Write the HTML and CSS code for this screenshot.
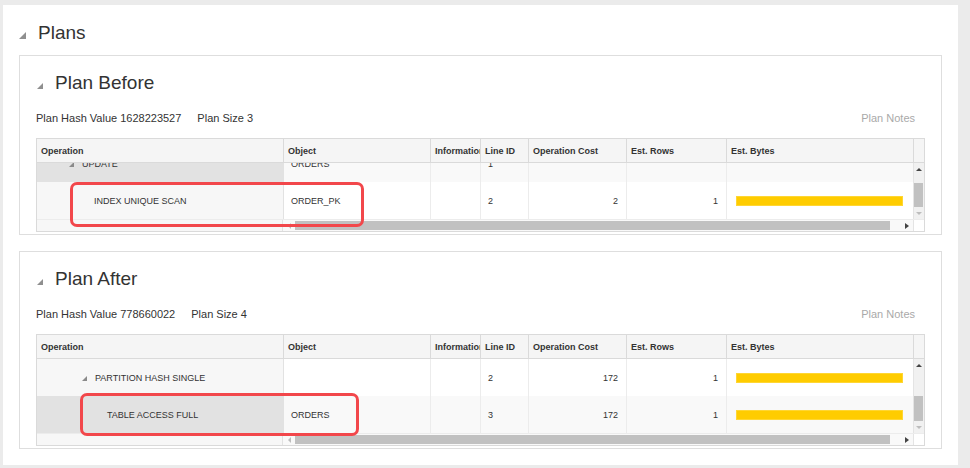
FILE: index.html
```html
<!DOCTYPE html>
<html>
<head>
<meta charset="utf-8">
<link rel="stylesheet" href="styles.css">
</head>
<body>
<section class="panel">
  <h2 class="title"><span class="tri tri-main"></span>Plans</h2>

  <div class="plan">
    <h3 class="title"><span class="tri tri-sub"></span>Plan Before</h3>
    <div class="meta"><span>Plan Hash Value 1628223527</span><span>Plan Size 3</span><span class="notes">Plan Notes</span></div>
    <div class="grid">
      <div class="head">
        <div class="c">Operation</div>
        <div class="c">Object</div>
        <div class="c">Information</div>
        <div class="c">Line ID</div>
        <div class="c">Operation Cost</div>
        <div class="c">Est. Rows</div>
        <div class="c">Est. Bytes</div>
        <div class="c"></div>
      </div>
      <div class="body body-before">
        <div class="rows rows-scrolled">
          <div class="row row-alt">
            <div class="c op op-sel lvl-a"><span class="tw"></span>UPDATE</div>
            <div class="c">ORDERS</div>
            <div class="c"></div>
            <div class="c">1</div>
            <div class="c num"></div>
            <div class="c num"></div>
            <div class="c"></div>
          </div>
          <div class="row">
            <div class="c op op-light lvl-b">INDEX UNIQUE SCAN</div>
            <div class="c">ORDER_PK</div>
            <div class="c"></div>
            <div class="c">2</div>
            <div class="c num">2</div>
            <div class="c num">1</div>
            <div class="c"><span class="bar"></span></div>
          </div>
        </div>
        <div class="vscroll">
          <div class="arrow-box"><span class="ar-up"></span></div>
          <div class="track"><span class="vthumb vthumb-before"></span></div>
          <div class="arrow-box"><span class="ar-down"></span></div>
        </div>
      </div>
      <div class="hscroll">
        <div class="hs-frozen"></div>
        <div class="hs-track"><span class="ar-left"></span><span class="hthumb"></span><span class="ar-right"></span></div>
        <div class="hs-corner"></div>
      </div>
    </div>
    <div class="mark mark-before"></div>
  </div>

  <div class="plan">
    <h3 class="title"><span class="tri tri-sub"></span>Plan After</h3>
    <div class="meta"><span>Plan Hash Value 778660022</span><span>Plan Size 4</span><span class="notes">Plan Notes</span></div>
    <div class="grid">
      <div class="head">
        <div class="c">Operation</div>
        <div class="c">Object</div>
        <div class="c">Information</div>
        <div class="c">Line ID</div>
        <div class="c">Operation Cost</div>
        <div class="c">Est. Rows</div>
        <div class="c">Est. Bytes</div>
        <div class="c"></div>
      </div>
      <div class="body body-after">
        <div class="rows">
          <div class="row">
            <div class="c op op-light lvl-c"><span class="tw"></span>PARTITION HASH SINGLE</div>
            <div class="c"></div>
            <div class="c"></div>
            <div class="c">2</div>
            <div class="c num">172</div>
            <div class="c num">1</div>
            <div class="c"><span class="bar"></span></div>
          </div>
          <div class="row row-alt">
            <div class="c op op-sel lvl-d">TABLE ACCESS FULL</div>
            <div class="c">ORDERS</div>
            <div class="c"></div>
            <div class="c">3</div>
            <div class="c num">172</div>
            <div class="c num">1</div>
            <div class="c"><span class="bar"></span></div>
          </div>
        </div>
        <div class="vscroll">
          <div class="arrow-box"><span class="ar-up"></span></div>
          <div class="track"><span class="vthumb vthumb-after"></span></div>
          <div class="arrow-box"><span class="ar-down"></span></div>
        </div>
      </div>
      <div class="hscroll">
        <div class="hs-frozen"></div>
        <div class="hs-track"><span class="ar-left"></span><span class="hthumb"></span><span class="ar-right"></span></div>
        <div class="hs-corner"></div>
      </div>
    </div>
    <div class="mark mark-after"></div>
  </div>
</section>
</body>
</html>
```

FILE: styles.css
```css
* { box-sizing: border-box; }

body {
  margin: 0;
  background: #ebebeb;
  font-family: "Liberation Sans", Arial, sans-serif;
  color: #333;
}

.panel {
  margin: 5px 0 0 3px;
  width: 955px;
  height: 460px;
  background: #fff;
  padding: 16px 16px 0 16px;
}

.title {
  margin: 0;
  padding-top: 1px;
  font-weight: normal;
  font-size: 19px;
  line-height: 21px;
  color: #333;
  white-space: nowrap;
}

.tri {
  display: inline-block;
  width: 0;
  height: 0;
  border-left: 7px solid transparent;
  border-bottom: 7px solid #8f8f8f;
  margin-right: 12px;
}

.tri-sub {
  border-left-width: 6px;
  border-bottom-width: 6px;
  margin-left: 1px;
}

.plan {
  position: relative;
  margin-top: 12px;
  border: 1px solid #dedede;
  padding: 15px 16px 2px 16px;
}

.plan + .plan { margin-top: 16px; }

.meta {
  display: flex;
  gap: 16px;
  margin-top: 18px;
  font-size: 11px;
  line-height: 14px;
  white-space: nowrap;
}

.notes {
  margin-left: auto;
  margin-right: 10px;
  color: #a9a9a9;
}

.grid {
  margin-top: 13px;
  border: 1px solid #dadada;
}

.head {
  display: grid;
  grid-template-columns: 246px 147px 50px 48px 98px 100px 187px 11px;
  height: 24px;
  background: #f5f5f5;
  border-bottom: 1px solid #dadada;
}

.head .c {
  font-weight: bold;
  font-size: 9px;
  line-height: 23px;
  padding: 1px 4px 0;
  border-left: 1px solid #dadada;
  overflow: hidden;
  white-space: nowrap;
}

.head .c:first-child { border-left: 0; }

.body {
  display: flex;
  overflow: hidden;
}

.body-before { height: 56px; }
.body-after { height: 74px; }

.rows { width: 876px; }
.rows-scrolled { margin-top: -18px; }

.row {
  display: grid;
  grid-template-columns: 246px 147px 50px 48px 98px 100px 187px;
  height: 37px;
  background: #fff;
}

.row-alt { background: #f9f9f9; }

.row .c {
  font-size: 9px;
  line-height: 37px;
  padding: 1px 7px 0;
  border-left: 1px solid #ececec;
  white-space: nowrap;
  overflow: hidden;
}

.row .c:first-child { border-left: 0; }
.row .op + .c { border-left-color: #e2e2e2; }

.row .num { text-align: right; padding-right: 8px; }

.op-sel { background: #e2e2e2; }
.op-light { background: #f7f7f7; }

.lvl-a { padding-left: 32px !important; }
.lvl-b { padding-left: 57px !important; }
.lvl-c { padding-left: 45px !important; }
.lvl-d { padding-left: 70px !important; }

.tw {
  display: inline-block;
  width: 0;
  height: 0;
  border-left: 5px solid transparent;
  border-bottom: 5px solid #8a8a8a;
  margin-right: 8px;
}

.bar {
  display: inline-block;
  vertical-align: middle;
  width: 167px;
  height: 10px;
  margin-left: 2px;
  margin-top: -2px;
  background: #ffcc00;
  border: 1px solid #ffd633;
}

.vscroll {
  width: 11px;
  border-left: 1px solid #e4e4e4;
  background: #f1f1f1;
  display: flex;
  flex-direction: column;
}

.arrow-box {
  height: 12px;
  display: flex;
  align-items: center;
  justify-content: center;
}

.ar-up {
  width: 0;
  height: 0;
  border-left: 3px solid transparent;
  border-right: 3px solid transparent;
  border-bottom: 3px solid #444;
}

.ar-down {
  width: 0;
  height: 0;
  border-left: 3px solid transparent;
  border-right: 3px solid transparent;
  border-top: 3px solid #bdbdbd;
}

.track {
  flex: 1;
  display: flex;
  flex-direction: column;
  justify-content: flex-end;
}

.vthumb {
  display: block;
  width: 9px;
  background: #c1c1c1;
}

.vthumb-before { height: 24px; }
.vthumb-after { height: 25px; }

.hscroll {
  display: grid;
  grid-template-columns: 246px 630px 11px;
  height: 12px;
  border-top: 1px solid #ececec;
}

.hs-frozen {
  background: #f7f7f7;
  border-right: 1px solid #e2e2e2;
}

.hs-track {
  display: flex;
  align-items: center;
  background: #f9f9f9;
}

.ar-left {
  width: 0;
  height: 0;
  margin-left: 5px;
  margin-right: 4px;
  border-top: 3px solid transparent;
  border-bottom: 3px solid transparent;
  border-right: 3px solid #bdbdbd;
}

.hthumb {
  display: block;
  width: 595px;
  height: 9px;
  background: #c1c1c1;
}

.ar-right {
  width: 0;
  height: 0;
  margin-left: 15px;
  border-top: 3px solid transparent;
  border-bottom: 3px solid transparent;
  border-left: 4px solid #444;
}

.hs-corner {
  background: #fff;
  border-left: 1px solid #e4e4e4;
}

.mark {
  position: absolute;
  border: 3px solid #f2474b;
  border-radius: 7px;
}

.mark-before {
  left: 50px;
  top: 126px;
  width: 294px;
  height: 45px;
}

.mark-after {
  left: 60px;
  top: 141px;
  width: 279px;
  height: 43px;
}
```
